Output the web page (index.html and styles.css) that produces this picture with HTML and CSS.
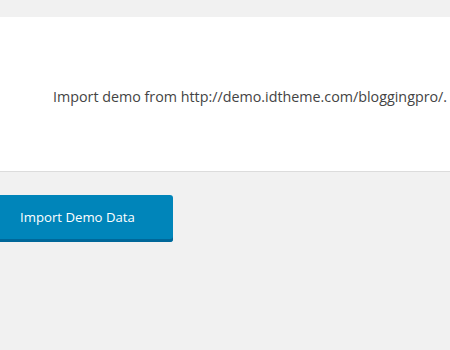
FILE: index.html
```html
<!DOCTYPE html>
<html lang="en">
    <head>
        <meta charset="UTF-8">
        <meta name="viewport" content="width=device-width, initial-scale=1.0">
        <title>Import Demo Data</title>
        <link rel="stylesheet" href="styles.css">
    </head>
    <body>
        <div class="demo-panel">
            <p class="demo-info">Import demo from http://demo.idtheme.com/bloggingpro/.</p>
        </div>
        <div class="demo-actions">
            <button class="boton-importar">Import Demo Data</button>
        </div>
    </body>
</html>
```

FILE: styles.css
```css
* {
    box-sizing: border-box;
    font-family: "Open Sans", "Noto Sans", sans-serif;
}

body {
    margin: 0;
    background: #f1f1f1;
    color: #444;
    width: 450px;
    height: 350px;
    overflow: hidden;
}

.demo-panel {
    margin-top: 17px;
    height: 155px;
    background: #fff;
    border-bottom: 1px solid #dcdcdc;
    padding: 70px 0 0 53px;
    white-space: nowrap;
}

.demo-info {
    margin: 0;
    font-size: 14.3px;
    line-height: 19px;
}

.demo-actions {
    padding-top: 23px;
}

.boton-importar {
    margin-left: -16px;
    height: 47px;
    padding: 0 38px 3px 36px;
    font-size: 13.2px;
    color: #fff;
    background: #0085ba;
    border: none;
    border-radius: 3px;
    box-shadow: inset 0 -3px 0 #006799;
    cursor: pointer;
}
```
